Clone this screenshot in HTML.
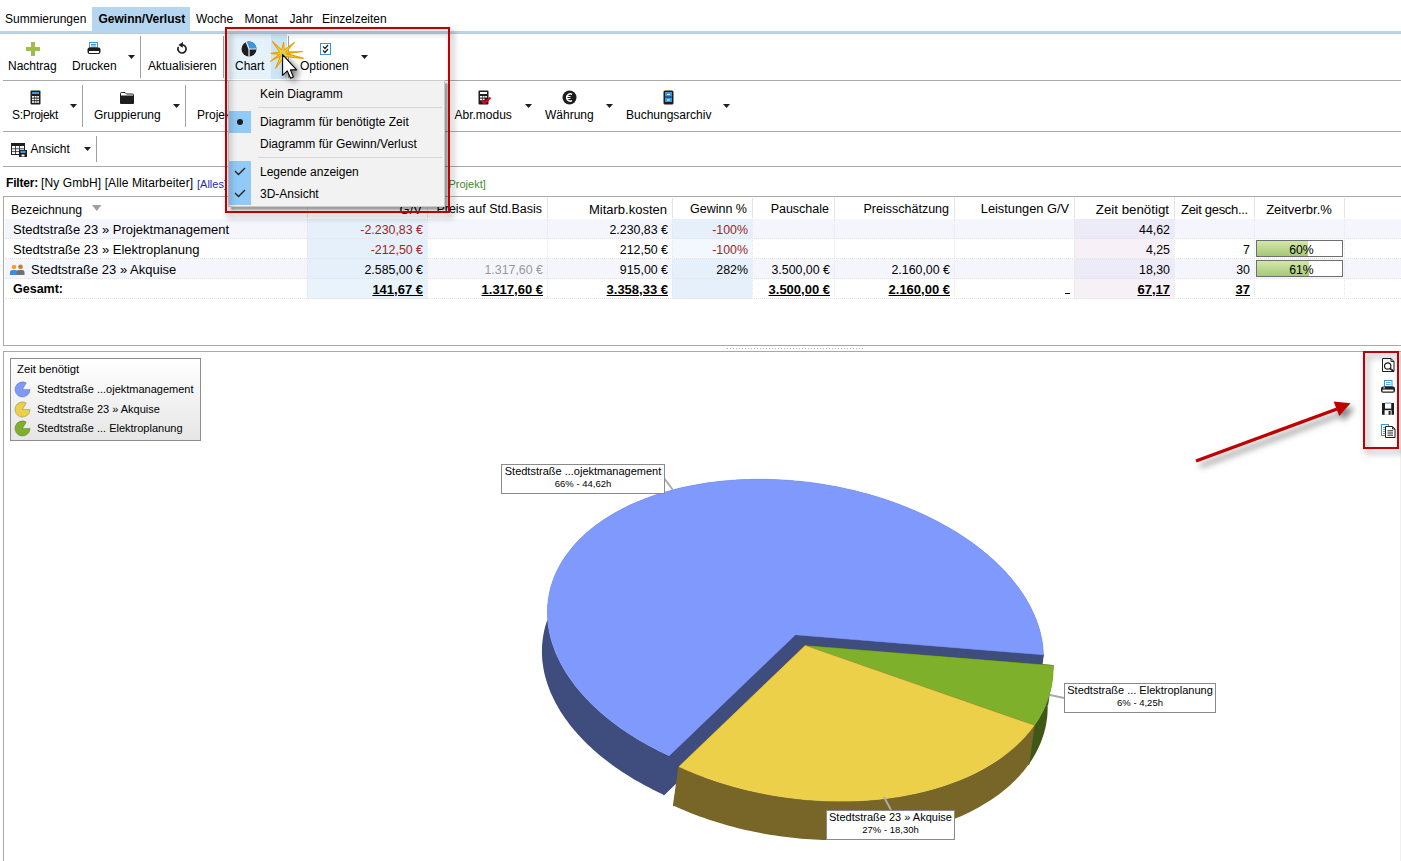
<!DOCTYPE html><html><head><meta charset="utf-8"><style>
html,body{margin:0;padding:0}
body{width:1401px;height:861px;position:relative;overflow:hidden;background:#fff;font-family:'Liberation Sans',sans-serif;}
.t{position:absolute;white-space:nowrap}
.r{position:absolute}
svg.r{overflow:visible}
</style></head><body>
<div class="r" style="left:92px;top:7px;width:98px;height:24px;background:#b5d6f1;"></div>
<div class="r" style="left:0px;top:31px;width:1401px;height:2px;background:#b5d6f1;"></div>
<div class="r" style="left:0px;top:33px;width:1401px;height:1px;background:#c8c8c8;"></div>
<div class="t" style="top:13px;font-size:12px;line-height:12px;color:#000;left:5px;">Summierungen</div>
<div class="t" style="top:13px;font-size:12px;line-height:12px;color:#000;font-weight:bold;left:98.5px;">Gewinn/Verlust</div>
<div class="t" style="top:13px;font-size:12px;line-height:12px;color:#000;left:196px;">Woche</div>
<div class="t" style="top:13px;font-size:12px;line-height:12px;color:#000;left:244.5px;">Monat</div>
<div class="t" style="top:13px;font-size:12px;line-height:12px;color:#000;left:289.5px;">Jahr</div>
<div class="t" style="top:13px;font-size:12px;line-height:12px;color:#000;left:322px;">Einzelzeiten</div>
<div class="r" style="left:3px;top:80px;width:1398px;height:1px;background:#a9a9a9;"></div>
<div class="r" style="left:31px;top:42px;width:4px;height:14px;background:#9fbc4f;"></div>
<div class="r" style="left:26px;top:47px;width:14px;height:4px;background:#9fbc4f;"></div>
<div class="t" style="top:60px;font-size:12px;line-height:12px;color:#000;left:8px;">Nachtrag</div>
<svg class="r" style="left:86px;top:41px" width="16" height="15" viewBox="0 0 16 15">
<rect x="3.5" y="1.5" width="8" height="5" fill="#fff" stroke="#3a96dd" stroke-width="1"/>
<path d="M5 3.5H10M5 5H10" stroke="#3a96dd" stroke-width="1"/>
<rect x="1.5" y="6.5" width="13" height="6.5" rx="2" fill="#1e1e1e"/>
<rect x="3" y="10" width="10" height="2" fill="#fff"/>
</svg>
<div class="t" style="top:60px;font-size:12px;line-height:12px;color:#000;left:72px;">Drucken</div>
<svg class="r" style="left:128px;top:55px" width="8" height="5"><path d="M0 0H7L3.5 4Z" fill="#1e1e1e"/></svg>
<div class="r" style="left:140px;top:36px;width:1px;height:42px;background:#a0a0a0;"></div>
<svg class="r" style="left:176px;top:41px" width="12" height="13" viewBox="0 0 12 13">
<path d="M6 3.8A4.1 4.1 0 1 1 2.45 5.85" fill="none" stroke="#1e1e1e" stroke-width="1.7"/>
<path d="M2.4 3.9L7 1L6.7 6.7Z" fill="#1e1e1e"/>
</svg>
<div class="t" style="top:60px;font-size:12px;line-height:12px;color:#000;left:148px;">Aktualisieren</div>
<div class="r" style="left:223px;top:36px;width:1px;height:42px;background:#a0a0a0;"></div>
<div class="r" style="left:227px;top:34px;width:44px;height:45px;background:#e5f1fb;"></div>
<div class="r" style="left:271px;top:34px;width:16px;height:45px;background:#cce4f7;"></div>
<svg class="r" style="left:241px;top:41px" width="16" height="16" viewBox="0 0 16 16">
<circle cx="8" cy="8" r="7.5" fill="#1e1e1e"/>
<path d="M8 8L5.19 1.05A7.5 7.5 0 0 1 15.5 8Z" fill="#3a96dd"/>
<path d="M8 8L5.19 1.05M8 8H15.6M8 8V15.6" stroke="#e5f1fb" stroke-width="1.2"/>
</svg>
<div class="t" style="top:60px;font-size:12px;line-height:12px;color:#000;left:235px;">Chart</div>
<div class="r" style="left:288px;top:36px;width:1px;height:42px;background:#a0a0a0;"></div>
<svg class="r" style="left:320px;top:43px" width="11" height="12" viewBox="0 0 11 12">
<rect x="0.5" y="0.5" width="10" height="11" fill="#fff" stroke="#3a96dd"/>
<path d="M3 3.5L5 5.5L8 2M3 7.5L5 9.5L8 6" fill="none" stroke="#1e1e1e" stroke-width="1.2"/>
</svg>
<div class="t" style="top:60px;font-size:12px;line-height:12px;color:#000;left:300px;">Optionen</div>
<svg class="r" style="left:361px;top:55px" width="8" height="5"><path d="M0 0H7L3.5 4Z" fill="#1e1e1e"/></svg>
<div class="r" style="left:3px;top:131px;width:1398px;height:1px;background:#a9a9a9;"></div>
<svg class="r" style="left:30px;top:90px" width="11" height="15" viewBox="0 0 11 15">
<rect x="0.5" y="0.5" width="10" height="14" rx="1" fill="#1e1e1e"/>
<rect x="2" y="2" width="7" height="2" fill="#3a96dd"/>
<g fill="#fff"><rect x="2" y="6" width="2" height="1.6"/><rect x="4.6" y="6" width="2" height="1.6"/><rect x="7.2" y="6" width="1.8" height="1.6"/>
<rect x="2" y="8.6" width="2" height="1.6"/><rect x="4.6" y="8.6" width="2" height="1.6"/><rect x="7.2" y="8.6" width="1.8" height="1.6"/>
<rect x="2" y="11.2" width="2" height="1.6"/><rect x="4.6" y="11.2" width="2" height="1.6"/><rect x="7.2" y="11.2" width="1.8" height="1.6"/></g>
</svg>
<div class="t" style="top:109px;font-size:12px;line-height:12px;color:#000;left:12px;letter-spacing:-0.3px;">S:Projekt</div>
<svg class="r" style="left:70px;top:104px" width="8" height="5"><path d="M0 0H7L3.5 4Z" fill="#1e1e1e"/></svg>
<div class="r" style="left:82px;top:85px;width:1px;height:42px;background:#a0a0a0;"></div>
<svg class="r" style="left:120px;top:92px" width="14" height="12" viewBox="0 0 14 12">
<path d="M0.5 1.5Q0.5 0.5 1.5 0.5H5L6.5 2H12.5Q13.5 2 13.5 3V11.5H0.5Z" fill="#fff" stroke="#1e1e1e"/>
<rect x="0.5" y="3.5" width="13" height="8" rx="1" fill="#1e1e1e"/>
</svg>
<div class="t" style="top:109px;font-size:12px;line-height:12px;color:#000;left:94px;">Gruppierung</div>
<svg class="r" style="left:173px;top:104px" width="8" height="5"><path d="M0 0H7L3.5 4Z" fill="#1e1e1e"/></svg>
<div class="r" style="left:185px;top:85px;width:1px;height:42px;background:#a0a0a0;"></div>
<div class="t" style="top:109px;font-size:12px;line-height:12px;color:#000;left:197px;">Projekt</div>
<svg class="r" style="left:478px;top:90px" width="14" height="15" viewBox="0 0 14 15">
<rect x="0.5" y="0.5" width="10" height="14" rx="1" fill="#1e1e1e"/>
<rect x="2" y="2" width="7" height="2" fill="#fff"/>
<g fill="#fff"><rect x="2" y="6" width="2" height="1.6"/><rect x="4.6" y="6" width="2" height="1.6"/><rect x="7.2" y="6" width="1.8" height="1.6"/>
<rect x="2" y="8.6" width="2" height="1.6"/><rect x="4.6" y="8.6" width="2" height="1.6"/></g>
<path d="M3.5 10.5L6.5 13L12.5 7.5" fill="none" stroke="#e8001c" stroke-width="2.2"/>
</svg>
<div class="t" style="top:109px;font-size:12px;line-height:12px;color:#000;left:454.5px;">Abr.modus</div>
<svg class="r" style="left:525px;top:104px" width="8" height="5"><path d="M0 0H7L3.5 4Z" fill="#1e1e1e"/></svg>
<svg class="r" style="left:562px;top:90px" width="15" height="15" viewBox="0 0 15 15">
<circle cx="7.5" cy="7.5" r="7" fill="#1e1e1e"/>
<path d="M10 4.3A3.6 3.6 0 1 0 10 10.7" fill="none" stroke="#fff" stroke-width="1.5"/>
<path d="M4 6.5H8.5M4 8.5H8.5" stroke="#fff" stroke-width="1"/>
</svg>
<div class="t" style="top:109px;font-size:12px;line-height:12px;color:#000;left:545px;">Währung</div>
<svg class="r" style="left:606px;top:104px" width="8" height="5"><path d="M0 0H7L3.5 4Z" fill="#1e1e1e"/></svg>
<svg class="r" style="left:663px;top:90px" width="11" height="15" viewBox="0 0 11 15">
<rect x="0.5" y="0.5" width="10" height="14" rx="1.5" fill="#1e1e1e"/>
<rect x="2" y="2" width="7" height="4.5" fill="#3a96dd"/>
<rect x="2" y="7.5" width="7" height="4.5" fill="#3a96dd"/>
<rect x="4" y="4" width="3" height="1" fill="#fff"/><rect x="4" y="9.5" width="3" height="1" fill="#fff"/>
</svg>
<div class="t" style="top:109px;font-size:12px;line-height:12px;color:#000;left:626px;">Buchungsarchiv</div>
<svg class="r" style="left:723px;top:104px" width="8" height="5"><path d="M0 0H7L3.5 4Z" fill="#1e1e1e"/></svg>
<div class="r" style="left:3px;top:166px;width:1398px;height:1px;background:#a9a9a9;"></div>
<svg class="r" style="left:11px;top:143px" width="16" height="14" viewBox="0 0 16 14">
<rect x="0.5" y="0.5" width="13" height="11" fill="#fff" stroke="#1e1e1e"/>
<rect x="0.5" y="0.5" width="13" height="2.5" fill="#1e1e1e"/>
<path d="M4.5 3V11.5M8.5 3V11.5M0.5 5.8H13.5M0.5 8.6H13.5" stroke="#1e1e1e" stroke-width="0.8"/>
<rect x="8" y="7" width="8" height="7" fill="#1e1e1e"/>
<rect x="9.5" y="7.8" width="5" height="2.2" fill="#3a96dd"/>
<rect x="10.5" y="11.5" width="3" height="2" fill="#fff"/>
</svg>
<div class="t" style="top:143px;font-size:12px;line-height:12px;color:#000;left:30.5px;">Ansicht</div>
<svg class="r" style="left:84px;top:147px" width="8" height="5"><path d="M0 0H7L3.5 4Z" fill="#1e1e1e"/></svg>
<div class="r" style="left:96px;top:136px;width:1px;height:26px;background:#a0a0a0;"></div>
<div class="t" style="top:177px;font-size:12px;line-height:12px;color:#000;font-weight:bold;left:6px;letter-spacing:-0.2px;">Filter:</div>
<div class="t" style="top:177px;font-size:12px;line-height:12px;color:#000;left:41px;letter-spacing:0.1px;">[Ny GmbH] [Alle Mitarbeiter]</div>
<div class="t" style="top:179px;font-size:11px;line-height:11px;color:#2828b4;left:197px;">[Alles]</div>
<div class="t" style="top:179px;font-size:11px;line-height:11px;color:#3c8a1e;left:448.5px;">Projekt]</div>
<div class="r" style="left:3px;top:196px;width:1398px;height:1px;background:#a9a9a9;"></div>
<div class="r" style="left:3px;top:196px;width:1px;height:150px;background:#a9a9a9;"></div>
<div class="r" style="left:3px;top:345px;width:1398px;height:1px;background:#a9a9a9;"></div>
<div class="r" style="left:307px;top:198px;width:1px;height:20px;background:#e4e4e4;"></div>
<div class="r" style="left:427px;top:198px;width:1px;height:20px;background:#e4e4e4;"></div>
<div class="r" style="left:547px;top:198px;width:1px;height:20px;background:#e4e4e4;"></div>
<div class="r" style="left:672px;top:198px;width:1px;height:20px;background:#e4e4e4;"></div>
<div class="r" style="left:752px;top:198px;width:1px;height:20px;background:#e4e4e4;"></div>
<div class="r" style="left:834px;top:198px;width:1px;height:20px;background:#e4e4e4;"></div>
<div class="r" style="left:954px;top:198px;width:1px;height:20px;background:#e4e4e4;"></div>
<div class="r" style="left:1074px;top:198px;width:1px;height:20px;background:#e4e4e4;"></div>
<div class="r" style="left:1174px;top:198px;width:1px;height:20px;background:#e4e4e4;"></div>
<div class="r" style="left:1254px;top:198px;width:1px;height:20px;background:#e4e4e4;"></div>
<div class="r" style="left:1344px;top:198px;width:1px;height:20px;background:#e4e4e4;"></div>
<div class="t" style="top:204px;font-size:12.3px;line-height:12.3px;color:#000;left:11px;">Bezeichnung</div>
<svg class="r" style="left:92px;top:205px" width="10" height="7"><path d="M0 0H9.5L4.75 6Z" fill="#a0a0a0"/></svg>
<div class="t" style="top:203px;font-size:13px;line-height:13px;color:#000;right:979px;text-align:right;">G/V</div>
<div class="t" style="top:203px;font-size:12.5px;line-height:12.5px;color:#000;right:859px;text-align:right;">Preis auf Std.Basis</div>
<div class="t" style="top:203px;font-size:13px;line-height:13px;color:#000;right:734px;text-align:right;">Mitarb.kosten</div>
<div class="t" style="top:203px;font-size:12.5px;line-height:12.5px;color:#000;right:654px;text-align:right;">Gewinn %</div>
<div class="t" style="top:203px;font-size:12.5px;line-height:12.5px;color:#000;right:572px;text-align:right;">Pauschale</div>
<div class="t" style="top:203px;font-size:12.5px;line-height:12.5px;color:#000;right:452px;text-align:right;">Preisschätzung</div>
<div class="t" style="top:203px;font-size:12.8px;line-height:12.8px;color:#000;right:332px;text-align:right;">Leistungen G/V</div>
<div class="t" style="top:203px;font-size:13.3px;line-height:13.3px;color:#000;right:232px;text-align:right;">Zeit benötigt</div>
<div class="t" style="top:203px;font-size:13px;line-height:13px;color:#000;left:1181px;letter-spacing:-0.3px;">Zeit gesch...</div>
<div class="t" style="top:203px;font-size:13px;line-height:13px;color:#000;left:1249.0px;width:100px;text-align:center;">Zeitverbr.%</div>
<div class="r" style="left:5px;top:219px;width:1396px;height:20px;background:#f5f6fd;"></div>
<div class="r" style="left:307px;top:219px;width:120px;height:20px;background:#e6f0fa;"></div>
<div class="r" style="left:672px;top:219px;width:80px;height:20px;background:#e6f0fa;"></div>
<div class="r" style="left:1074px;top:219px;width:100px;height:20px;background:#eeebf8;"></div>
<div class="r" style="left:5px;top:238px;width:1396px;height:0;border-top:1px dotted #e2e2e2"></div>
<div class="r" style="left:5px;top:239px;width:1396px;height:20px;background:#ffffff;"></div>
<div class="r" style="left:307px;top:239px;width:120px;height:20px;background:#e6f0fa;"></div>
<div class="r" style="left:672px;top:239px;width:80px;height:20px;background:#f2f8fd;"></div>
<div class="r" style="left:1074px;top:239px;width:100px;height:20px;background:#f7f1f7;"></div>
<div class="r" style="left:5px;top:258px;width:1396px;height:0;border-top:1px dotted #e2e2e2"></div>
<div class="r" style="left:5px;top:259px;width:1396px;height:20px;background:#f5f6fd;"></div>
<div class="r" style="left:307px;top:259px;width:120px;height:20px;background:#e6f0fa;"></div>
<div class="r" style="left:672px;top:259px;width:80px;height:20px;background:#e6f0fa;"></div>
<div class="r" style="left:1074px;top:259px;width:100px;height:20px;background:#eeebf8;"></div>
<div class="r" style="left:5px;top:278px;width:1396px;height:0;border-top:1px dotted #e2e2e2"></div>
<div class="r" style="left:5px;top:279px;width:1396px;height:20px;background:#ffffff;"></div>
<div class="r" style="left:307px;top:279px;width:120px;height:20px;background:#e9f3fb;"></div>
<div class="r" style="left:672px;top:279px;width:80px;height:20px;background:#e6f0fa;"></div>
<div class="r" style="left:1074px;top:279px;width:100px;height:20px;background:#f7f1f7;"></div>
<div class="r" style="left:5px;top:298px;width:1396px;height:0;border-top:1px dotted #e2e2e2"></div>
<div class="r" style="left:307px;top:219px;width:0;height:80px;border-left:1px dotted #e6e6e6"></div>
<div class="r" style="left:427px;top:219px;width:0;height:80px;border-left:1px dotted #e6e6e6"></div>
<div class="r" style="left:547px;top:219px;width:0;height:80px;border-left:1px dotted #e6e6e6"></div>
<div class="r" style="left:672px;top:219px;width:0;height:80px;border-left:1px dotted #e6e6e6"></div>
<div class="r" style="left:752px;top:219px;width:0;height:80px;border-left:1px dotted #e6e6e6"></div>
<div class="r" style="left:834px;top:219px;width:0;height:80px;border-left:1px dotted #e6e6e6"></div>
<div class="r" style="left:954px;top:219px;width:0;height:80px;border-left:1px dotted #e6e6e6"></div>
<div class="r" style="left:1074px;top:219px;width:0;height:80px;border-left:1px dotted #e6e6e6"></div>
<div class="r" style="left:1174px;top:219px;width:0;height:80px;border-left:1px dotted #e6e6e6"></div>
<div class="r" style="left:1254px;top:219px;width:0;height:80px;border-left:1px dotted #e6e6e6"></div>
<div class="r" style="left:1344px;top:219px;width:0;height:80px;border-left:1px dotted #e6e6e6"></div>
<div class="t" style="top:223px;font-size:13px;line-height:13px;color:#000;left:13px;">Stedtstraße 23 » Projektmanagement</div>
<div class="t" style="top:243px;font-size:13px;line-height:13px;color:#000;left:13px;">Stedtstraße 23 » Elektroplanung</div>
<div class="t" style="top:263px;font-size:13px;line-height:13px;color:#000;left:31px;">Stedtstraße 23 » Akquise</div>
<div class="t" style="top:283px;font-size:12.5px;line-height:12.5px;color:#000;font-weight:bold;left:13px;">Gesamt:</div>
<svg class="r" style="left:10px;top:264px" width="15" height="11" viewBox="0 0 15 11">
<circle cx="4" cy="3" r="2.3" fill="#f0a030"/><path d="M0 11V8Q0 6 2.5 6H5.5Q8 6 8 8V11Z" fill="#3a8ee0"/>
<circle cx="10.5" cy="3" r="2.3" fill="#e09a30"/><path d="M6.5 11V8Q6.5 6 9 6H12Q14.5 6 14.5 8V11Z" fill="#707070"/>
<circle cx="10.5" cy="2.5" r="2.3" fill="#5a4030" opacity="0.25"/>
</svg>
<div class="t" style="top:224px;font-size:12.4px;line-height:12.4px;color:#9c2626;right:978px;text-align:right;">-2.230,83 €</div>
<div class="t" style="top:244px;font-size:12.4px;line-height:12.4px;color:#9c2626;right:978px;text-align:right;">-212,50 €</div>
<div class="t" style="top:264px;font-size:12.4px;line-height:12.4px;color:#000;right:978px;text-align:right;">2.585,00 €</div>
<div class="t" style="top:283px;font-size:13px;line-height:13px;color:#000;font-weight:bold;right:978px;text-align:right;text-decoration:underline;">141,67 €</div>
<div class="t" style="top:264px;font-size:12.4px;line-height:12.4px;color:#999999;right:858px;text-align:right;">1.317,60 €</div>
<div class="t" style="top:283px;font-size:13px;line-height:13px;color:#000;font-weight:bold;right:858px;text-align:right;text-decoration:underline;">1.317,60 €</div>
<div class="t" style="top:224px;font-size:12.4px;line-height:12.4px;color:#000;right:733px;text-align:right;">2.230,83 €</div>
<div class="t" style="top:244px;font-size:12.4px;line-height:12.4px;color:#000;right:733px;text-align:right;">212,50 €</div>
<div class="t" style="top:264px;font-size:12.4px;line-height:12.4px;color:#000;right:733px;text-align:right;">915,00 €</div>
<div class="t" style="top:283px;font-size:13px;line-height:13px;color:#000;font-weight:bold;right:733px;text-align:right;text-decoration:underline;">3.358,33 €</div>
<div class="t" style="top:224px;font-size:12.4px;line-height:12.4px;color:#9c2626;right:653px;text-align:right;">-100%</div>
<div class="t" style="top:244px;font-size:12.4px;line-height:12.4px;color:#9c2626;right:653px;text-align:right;">-100%</div>
<div class="t" style="top:264px;font-size:12.4px;line-height:12.4px;color:#000;right:653px;text-align:right;">282%</div>
<div class="t" style="top:264px;font-size:12.4px;line-height:12.4px;color:#000;right:571px;text-align:right;">3.500,00 €</div>
<div class="t" style="top:283px;font-size:13px;line-height:13px;color:#000;font-weight:bold;right:571px;text-align:right;text-decoration:underline;">3.500,00 €</div>
<div class="t" style="top:264px;font-size:12.4px;line-height:12.4px;color:#000;right:451px;text-align:right;">2.160,00 €</div>
<div class="t" style="top:283px;font-size:13px;line-height:13px;color:#000;font-weight:bold;right:451px;text-align:right;text-decoration:underline;">2.160,00 €</div>
<div class="r" style="left:1065px;top:293px;width:5px;height:1px;background:#000;"></div>
<div class="t" style="top:224px;font-size:12.4px;line-height:12.4px;color:#000;right:231px;text-align:right;">44,62</div>
<div class="t" style="top:244px;font-size:12.4px;line-height:12.4px;color:#000;right:231px;text-align:right;">4,25</div>
<div class="t" style="top:264px;font-size:12.4px;line-height:12.4px;color:#000;right:231px;text-align:right;">18,30</div>
<div class="t" style="top:283px;font-size:13px;line-height:13px;color:#000;font-weight:bold;right:231px;text-align:right;text-decoration:underline;">67,17</div>
<div class="t" style="top:244px;font-size:12.4px;line-height:12.4px;color:#000;right:151px;text-align:right;">7</div>
<div class="t" style="top:264px;font-size:12.4px;line-height:12.4px;color:#000;right:151px;text-align:right;">30</div>
<div class="t" style="top:283px;font-size:13px;line-height:13px;color:#000;font-weight:bold;right:151px;text-align:right;text-decoration:underline;">37</div>
<div class="r" style="left:1256px;top:240px;width:85px;height:15px;border:1px solid #6e6e6e;background:#fff"></div>
<div class="r" style="left:1257px;top:241px;width:51px;height:15px;background:linear-gradient(#d2e7aa,#a6c976)"></div>
<div class="t" style="top:244px;font-size:12.2px;line-height:12.2px;color:#000;left:1261.5px;width:80px;text-align:center;">60%</div>
<div class="r" style="left:1256px;top:260px;width:85px;height:15px;border:1px solid #6e6e6e;background:#fff"></div>
<div class="r" style="left:1257px;top:261px;width:52px;height:15px;background:linear-gradient(#d2e7aa,#a6c976)"></div>
<div class="t" style="top:264px;font-size:12.2px;line-height:12.2px;color:#000;left:1261.5px;width:80px;text-align:center;">61%</div>
<div class="r" style="left:3px;top:351px;width:1398px;height:1px;background:#a9a9a9;"></div>
<div class="r" style="left:3px;top:351px;width:1px;height:510px;background:#a9a9a9;"></div>
<div class="r" style="left:727px;top:348px;width:137px;height:1px;background:repeating-linear-gradient(90deg,#b0b0b0 0 1px,transparent 1px 3px)"></div>
<div class="r" style="left:1400px;top:352px;width:1px;height:509px;background:#f0f0f0;"></div>
<div class="r" style="left:10px;top:358px;width:189px;height:81px;border:1px solid #8c8c8c;background:linear-gradient(#ffffff,#e6e6e6)"></div>
<div class="t" style="top:364px;font-size:11.3px;line-height:11.3px;color:#000;left:17px;">Zeit benötigt</div>
<svg class="r" style="left:14.4px;top:381.3px" width="17" height="17" viewBox="0 0 17 17"><path d="M8.5 8.5H16.1A7.6 7.6 0 1 1 12.3 1.92Z" fill="#7f99fd" stroke="rgba(0,0,0,0.25)" stroke-width="0.8"/></svg>
<div class="t" style="top:384px;font-size:11px;line-height:11px;color:#000;left:37px;">Stedtstraße ...ojektmanagement</div>
<svg class="r" style="left:14.4px;top:400.5px" width="17" height="17" viewBox="0 0 17 17"><path d="M8.5 8.5H16.1A7.6 7.6 0 1 1 12.3 1.92Z" fill="#edd04a" stroke="rgba(0,0,0,0.25)" stroke-width="0.8"/></svg>
<div class="t" style="top:404px;font-size:11px;line-height:11px;color:#000;left:37px;">Stedtstraße 23 » Akquise</div>
<svg class="r" style="left:14.4px;top:420px" width="17" height="17" viewBox="0 0 17 17"><path d="M8.5 8.5H16.1A7.6 7.6 0 1 1 12.3 1.92Z" fill="#7fb02c" stroke="rgba(0,0,0,0.25)" stroke-width="0.8"/></svg>
<div class="t" style="top:423px;font-size:11px;line-height:11px;color:#000;left:37px;">Stedtstraße ... Elektroplanung</div>
<svg class="r" style="left:0;top:0" width="1401" height="861"><polygon points="669.2,755.7 665.4,753.9 661.8,752.2 658.1,750.4 654.6,748.5 651.0,746.7 647.5,744.8 644.0,742.8 640.6,740.9 637.3,738.9 633.9,736.8 630.7,734.8 627.5,732.7 624.3,730.5 621.2,728.4 618.1,726.2 615.1,724.0 612.2,721.8 609.3,719.5 606.4,717.2 603.7,714.9 600.9,712.5 598.3,710.2 595.7,707.8 593.1,705.4 590.7,702.9 588.2,700.5 585.9,698.0 583.6,695.5 581.4,693.0 579.2,690.5 577.1,687.9 575.1,685.4 573.2,682.8 571.3,680.2 569.4,677.6 567.7,675.0 566.0,672.4 564.4,669.7 562.9,667.1 561.4,664.4 560.0,661.7 558.7,659.0 557.4,656.3 556.2,653.7 555.1,651.0 554.1,648.2 553.1,645.5 552.2,642.8 551.4,640.1 550.7,637.4 550.0,634.7 549.4,632.0 548.9,629.2 548.5,626.5 548.1,623.8 547.8,621.1 547.6,618.4 547.5,615.7 547.4,613.0 547.5,610.3 547.5,607.6 547.7,605.0 548.0,602.3 548.3,599.6 548.7,597.0 549.1,594.4 549.7,591.7 550.3,589.1 551.0,586.5 551.8,584.0 552.6,581.4 553.6,578.9 554.5,576.3 555.6,573.8 556.8,571.3 558.0,568.9 559.3,566.4 560.6,564.0 562.0,561.6 563.5,559.2 565.1,556.8 566.8,554.5 568.5,552.2 570.3,549.9 572.1,547.6 574.0,545.4 576.0,543.1 578.1,541.0 580.2,538.8 582.4,536.7 584.6,534.6 587.0,532.5 589.3,530.5 591.8,528.5 594.3,526.5 596.9,524.6 599.5,522.7 602.2,520.8 604.9,519.0 607.7,517.2 610.6,515.4 613.5,513.7 616.5,512.0 619.5,510.4 622.6,508.8 625.7,507.2 628.9,505.6 632.2,504.1 635.5,502.7 638.8,501.3 642.2,499.9 645.6,498.6 649.1,497.3 652.6,496.0 656.2,494.8 659.8,493.7 663.4,492.5 667.1,491.5 670.9,490.4 674.6,489.4 678.4,488.5 682.3,487.6 686.2,486.7 690.1,485.9 694.0,485.2 698.0,484.4 702.0,483.8 706.0,483.1 710.1,482.6 714.2,482.0 718.3,481.5 722.4,481.1 726.6,480.7 730.7,480.4 734.9,480.1 739.2,479.8 743.4,479.6 747.6,479.5 751.9,479.3 756.2,479.3 760.5,479.3 764.8,479.3 769.1,479.4 773.4,479.5 777.7,479.7 782.0,479.9 786.4,480.2 790.7,480.5 795.0,480.9 799.4,481.3 803.7,481.7 808.0,482.2 812.4,482.8 816.7,483.4 821.0,484.0 825.3,484.7 829.6,485.5 833.9,486.2 838.2,487.1 842.5,487.9 846.7,488.9 850.9,489.8 855.2,490.8 859.4,491.9 863.5,493.0 867.7,494.1 871.8,495.3 876.0,496.5 880.0,497.8 884.1,499.1 888.1,500.4 892.1,501.8 896.1,503.3 900.1,504.7 904.0,506.3 907.9,507.8 911.7,509.4 915.5,511.0 919.3,512.7 923.0,514.4 926.7,516.1 930.4,517.9 934.0,519.7 937.6,521.6 941.1,523.4 944.6,525.4 948.1,527.3 951.4,529.3 954.8,531.3 958.1,533.3 961.3,535.4 964.5,537.5 967.7,539.7 970.8,541.8 973.8,544.0 976.8,546.2 979.7,548.5 982.6,550.8 985.4,553.1 988.2,555.4 990.9,557.8 993.5,560.1 996.1,562.5 998.6,564.9 1001.1,567.4 1003.4,569.8 1005.8,572.3 1008.0,574.8 1010.2,577.3 1012.4,579.9 1014.4,582.4 1016.4,585.0 1018.4,587.6 1020.2,590.2 1022.0,592.8 1023.8,595.4 1025.4,598.0 1027.0,600.7 1028.5,603.3 1030.0,606.0 1031.3,608.7 1032.6,611.4 1033.8,614.1 1035.0,616.8 1036.1,619.5 1037.1,622.2 1038.0,624.9 1038.9,627.6 1039.7,630.3 1040.4,633.0 1041.0,635.8 1041.6,638.5 1042.1,641.2 1042.5,643.9 1042.8,646.6 1043.1,649.3 1043.2,652.0 1043.3,654.7 1037.8,693.7 1037.7,691.0 1037.6,688.3 1037.3,685.6 1037.0,682.9 1036.6,680.2 1036.1,677.5 1035.5,674.8 1034.9,672.0 1034.2,669.3 1033.4,666.6 1032.5,663.9 1031.6,661.2 1030.6,658.5 1029.5,655.8 1028.3,653.1 1027.1,650.4 1025.8,647.7 1024.5,645.0 1023.0,642.3 1021.5,639.7 1019.9,637.0 1018.3,634.4 1016.5,631.8 1014.7,629.2 1012.9,626.6 1010.9,624.0 1008.9,621.4 1006.9,618.9 1004.7,616.3 1002.5,613.8 1000.3,611.3 997.9,608.8 995.6,606.4 993.1,603.9 990.6,601.5 988.0,599.1 985.4,596.8 982.7,594.4 979.9,592.1 977.1,589.8 974.2,587.5 971.3,585.2 968.3,583.0 965.3,580.8 962.2,578.7 959.0,576.5 955.8,574.4 952.6,572.3 949.3,570.3 945.9,568.3 942.6,566.3 939.1,564.4 935.6,562.4 932.1,560.6 928.5,558.7 924.9,556.9 921.2,555.1 917.5,553.4 913.8,551.7 910.0,550.0 906.2,548.4 902.4,546.8 898.5,545.3 894.6,543.7 890.6,542.3 886.6,540.8 882.6,539.4 878.6,538.1 874.5,536.8 870.5,535.5 866.3,534.3 862.2,533.1 858.0,532.0 853.9,530.9 849.7,529.8 845.4,528.8 841.2,527.9 837.0,526.9 832.7,526.1 828.4,525.2 824.1,524.5 819.8,523.7 815.5,523.0 811.2,522.4 806.9,521.8 802.5,521.2 798.2,520.7 793.9,520.3 789.5,519.9 785.2,519.5 780.9,519.2 776.5,518.9 772.2,518.7 767.9,518.5 763.6,518.4 759.3,518.3 755.0,518.3 750.7,518.3 746.4,518.3 742.1,518.5 737.9,518.6 733.7,518.8 729.4,519.1 725.2,519.4 721.1,519.7 716.9,520.1 712.8,520.5 708.7,521.0 704.6,521.6 700.5,522.1 696.5,522.8 692.5,523.4 688.5,524.2 684.6,524.9 680.7,525.7 676.8,526.6 672.9,527.5 669.1,528.4 665.4,529.4 661.6,530.5 657.9,531.5 654.3,532.7 650.7,533.8 647.1,535.0 643.6,536.3 640.1,537.6 636.7,538.9 633.3,540.3 630.0,541.7 626.7,543.1 623.4,544.6 620.2,546.2 617.1,547.8 614.0,549.4 611.0,551.0 608.0,552.7 605.1,554.4 602.2,556.2 599.4,558.0 596.7,559.8 594.0,561.7 591.4,563.6 588.8,565.5 586.3,567.5 583.8,569.5 581.5,571.5 579.1,573.6 576.9,575.7 574.7,577.8 572.6,580.0 570.5,582.1 568.5,584.4 566.6,586.6 564.8,588.9 563.0,591.2 561.3,593.5 559.6,595.8 558.0,598.2 556.5,600.6 555.1,603.0 553.8,605.4 552.5,607.9 551.3,610.3 550.1,612.8 549.0,615.3 548.1,617.9 547.1,620.4 546.3,623.0 545.5,625.5 544.8,628.1 544.2,630.7 543.6,633.4 543.2,636.0 542.8,638.6 542.5,641.3 542.2,644.0 542.0,646.6 542.0,649.3 541.9,652.0 542.0,654.7 542.1,657.4 542.3,660.1 542.6,662.8 543.0,665.5 543.4,668.2 543.9,671.0 544.5,673.7 545.2,676.4 545.9,679.1 546.7,681.8 547.6,684.5 548.6,687.2 549.6,690.0 550.7,692.7 551.9,695.3 553.2,698.0 554.5,700.7 555.9,703.4 557.4,706.1 558.9,708.7 560.5,711.4 562.2,714.0 563.9,716.6 565.8,719.2 567.7,721.8 569.6,724.4 571.6,726.9 573.7,729.5 575.9,732.0 578.1,734.5 580.4,737.0 582.7,739.5 585.2,741.9 587.6,744.4 590.2,746.8 592.8,749.2 595.4,751.5 598.2,753.9 600.9,756.2 603.8,758.5 606.7,760.8 609.6,763.0 612.6,765.2 615.7,767.4 618.8,769.5 622.0,771.7 625.2,773.8 628.4,775.8 631.8,777.9 635.1,779.9 638.5,781.8 642.0,783.8 645.5,785.7 649.1,787.5 652.6,789.4 656.3,791.2 659.9,792.9 663.7,794.7" fill="#3f4c7e" stroke="#3f4c7e" stroke-width="0" stroke-linejoin="round"/><polygon points="795.4,634.7 669.2,755.7 663.7,794.7 789.9,673.7" fill="#3f4c7e" stroke="#3f4c7e" stroke-width="1.2" stroke-linejoin="round"/><polygon points="795.4,634.7 1043.3,654.7 1037.8,693.7 789.9,673.7" fill="#3f4c7e" stroke="#3f4c7e" stroke-width="1.2" stroke-linejoin="round"/><polygon points="795.4,634.7 669.2,755.7 665.4,753.9 661.8,752.2 658.1,750.4 654.6,748.5 651.0,746.7 647.5,744.8 644.0,742.8 640.6,740.9 637.3,738.9 633.9,736.8 630.7,734.8 627.5,732.7 624.3,730.5 621.2,728.4 618.1,726.2 615.1,724.0 612.2,721.8 609.3,719.5 606.4,717.2 603.7,714.9 600.9,712.5 598.3,710.2 595.7,707.8 593.1,705.4 590.7,702.9 588.2,700.5 585.9,698.0 583.6,695.5 581.4,693.0 579.2,690.5 577.1,687.9 575.1,685.4 573.2,682.8 571.3,680.2 569.4,677.6 567.7,675.0 566.0,672.4 564.4,669.7 562.9,667.1 561.4,664.4 560.0,661.7 558.7,659.0 557.4,656.3 556.2,653.7 555.1,651.0 554.1,648.2 553.1,645.5 552.2,642.8 551.4,640.1 550.7,637.4 550.0,634.7 549.4,632.0 548.9,629.2 548.5,626.5 548.1,623.8 547.8,621.1 547.6,618.4 547.5,615.7 547.4,613.0 547.5,610.3 547.5,607.6 547.7,605.0 548.0,602.3 548.3,599.6 548.7,597.0 549.1,594.4 549.7,591.7 550.3,589.1 551.0,586.5 551.8,584.0 552.6,581.4 553.6,578.9 554.5,576.3 555.6,573.8 556.8,571.3 558.0,568.9 559.3,566.4 560.6,564.0 562.0,561.6 563.5,559.2 565.1,556.8 566.8,554.5 568.5,552.2 570.3,549.9 572.1,547.6 574.0,545.4 576.0,543.1 578.1,541.0 580.2,538.8 582.4,536.7 584.6,534.6 587.0,532.5 589.3,530.5 591.8,528.5 594.3,526.5 596.9,524.6 599.5,522.7 602.2,520.8 604.9,519.0 607.7,517.2 610.6,515.4 613.5,513.7 616.5,512.0 619.5,510.4 622.6,508.8 625.7,507.2 628.9,505.6 632.2,504.1 635.5,502.7 638.8,501.3 642.2,499.9 645.6,498.6 649.1,497.3 652.6,496.0 656.2,494.8 659.8,493.7 663.4,492.5 667.1,491.5 670.9,490.4 674.6,489.4 678.4,488.5 682.3,487.6 686.2,486.7 690.1,485.9 694.0,485.2 698.0,484.4 702.0,483.8 706.0,483.1 710.1,482.6 714.2,482.0 718.3,481.5 722.4,481.1 726.6,480.7 730.7,480.4 734.9,480.1 739.2,479.8 743.4,479.6 747.6,479.5 751.9,479.3 756.2,479.3 760.5,479.3 764.8,479.3 769.1,479.4 773.4,479.5 777.7,479.7 782.0,479.9 786.4,480.2 790.7,480.5 795.0,480.9 799.4,481.3 803.7,481.7 808.0,482.2 812.4,482.8 816.7,483.4 821.0,484.0 825.3,484.7 829.6,485.5 833.9,486.2 838.2,487.1 842.5,487.9 846.7,488.9 850.9,489.8 855.2,490.8 859.4,491.9 863.5,493.0 867.7,494.1 871.8,495.3 876.0,496.5 880.0,497.8 884.1,499.1 888.1,500.4 892.1,501.8 896.1,503.3 900.1,504.7 904.0,506.3 907.9,507.8 911.7,509.4 915.5,511.0 919.3,512.7 923.0,514.4 926.7,516.1 930.4,517.9 934.0,519.7 937.6,521.6 941.1,523.4 944.6,525.4 948.1,527.3 951.4,529.3 954.8,531.3 958.1,533.3 961.3,535.4 964.5,537.5 967.7,539.7 970.8,541.8 973.8,544.0 976.8,546.2 979.7,548.5 982.6,550.8 985.4,553.1 988.2,555.4 990.9,557.8 993.5,560.1 996.1,562.5 998.6,564.9 1001.1,567.4 1003.4,569.8 1005.8,572.3 1008.0,574.8 1010.2,577.3 1012.4,579.9 1014.4,582.4 1016.4,585.0 1018.4,587.6 1020.2,590.2 1022.0,592.8 1023.8,595.4 1025.4,598.0 1027.0,600.7 1028.5,603.3 1030.0,606.0 1031.3,608.7 1032.6,611.4 1033.8,614.1 1035.0,616.8 1036.1,619.5 1037.1,622.2 1038.0,624.9 1038.9,627.6 1039.7,630.3 1040.4,633.0 1041.0,635.8 1041.6,638.5 1042.1,641.2 1042.5,643.9 1042.8,646.6 1043.1,649.3 1043.2,652.0 1043.3,654.7" fill="#7f99fd" stroke="#7f99fd" stroke-width="0.6" stroke-linejoin="round"/><polygon points="1053.1,665.7 1053.2,668.5 1053.1,671.2 1053.0,673.9 1052.8,676.7 1052.5,679.4 1052.1,682.1 1051.7,684.8 1051.2,687.4 1050.6,690.1 1049.9,692.8 1049.1,695.4 1048.3,698.0 1047.4,700.6 1046.4,703.2 1045.3,705.8 1044.2,708.3 1043.0,710.8 1041.7,713.3 1040.3,715.8 1038.9,718.3 1037.4,720.7 1035.8,723.1 1034.1,725.5 1028.6,764.5 1030.3,762.1 1031.9,759.7 1033.4,757.3 1034.8,754.8 1036.2,752.3 1037.5,749.8 1038.7,747.3 1039.8,744.8 1040.9,742.2 1041.9,739.6 1042.8,737.0 1043.6,734.4 1044.4,731.8 1045.1,729.1 1045.7,726.4 1046.2,723.8 1046.6,721.1 1047.0,718.4 1047.3,715.7 1047.5,712.9 1047.6,710.2 1047.7,707.5 1047.6,704.7" fill="#3f5816" stroke="#3f5816" stroke-width="0" stroke-linejoin="round"/><polygon points="805.2,645.7 1053.1,665.7 1047.6,704.7 799.7,684.7" fill="#3f5816" stroke="#3f5816" stroke-width="1.2" stroke-linejoin="round"/><polygon points="805.2,645.7 1034.1,725.5 1028.6,764.5 799.7,684.7" fill="#3f5816" stroke="#3f5816" stroke-width="1.2" stroke-linejoin="round"/><polygon points="805.2,645.7 1053.1,665.7 1053.2,668.5 1053.1,671.2 1053.0,673.9 1052.8,676.7 1052.5,679.4 1052.1,682.1 1051.7,684.8 1051.2,687.4 1050.6,690.1 1049.9,692.8 1049.1,695.4 1048.3,698.0 1047.4,700.6 1046.4,703.2 1045.3,705.8 1044.2,708.3 1043.0,710.8 1041.7,713.3 1040.3,715.8 1038.9,718.3 1037.4,720.7 1035.8,723.1 1034.1,725.5" fill="#7fb02c" stroke="#7fb02c" stroke-width="0.6" stroke-linejoin="round"/><polygon points="1034.1,725.5 1032.4,727.8 1030.7,730.1 1028.8,732.4 1026.9,734.6 1024.9,736.9 1022.9,739.0 1020.8,741.2 1018.6,743.3 1016.4,745.4 1014.1,747.5 1011.7,749.5 1009.3,751.5 1006.8,753.5 1004.3,755.4 1001.7,757.3 999.0,759.2 996.3,761.0 993.5,762.8 990.6,764.6 987.7,766.3 984.8,768.0 981.7,769.7 978.7,771.3 975.6,772.9 972.4,774.4 969.2,775.9 965.9,777.4 962.6,778.8 959.2,780.2 955.8,781.5 952.3,782.8 948.8,784.1 945.3,785.3 941.7,786.5 938.1,787.6 934.4,788.7 930.7,789.7 926.9,790.7 923.1,791.7 919.3,792.6 915.4,793.4 911.5,794.3 907.6,795.0 903.7,795.8 899.7,796.5 895.7,797.1 891.6,797.7 887.6,798.2 883.5,798.7 879.3,799.2 875.2,799.6 871.0,799.9 866.9,800.3 862.7,800.5 858.4,800.7 854.2,800.9 849.9,801.0 845.7,801.1 841.4,801.1 837.1,801.1 832.8,801.0 828.5,800.9 824.2,800.8 819.9,800.6 815.6,800.3 811.2,800.0 806.9,799.7 802.6,799.3 798.3,798.8 793.9,798.3 789.6,797.8 785.3,797.2 781.0,796.6 776.7,795.9 772.4,795.2 768.1,794.4 763.8,793.6 759.6,792.8 755.3,791.8 751.1,790.9 746.9,789.9 742.7,788.9 738.5,787.8 734.3,786.7 730.2,785.5 726.1,784.3 722.0,783.1 717.9,781.8 713.9,780.4 709.9,779.1 705.9,777.7 702.0,776.2 698.0,774.7 694.2,773.2 690.3,771.6 686.5,770.0 682.7,768.3 679.0,766.7 673.5,805.7 677.2,807.3 681.0,809.0 684.8,810.6 688.7,812.2 692.5,813.7 696.5,815.2 700.4,816.7 704.4,818.1 708.4,819.4 712.4,820.8 716.5,822.1 720.6,823.3 724.7,824.5 728.8,825.7 733.0,826.8 737.2,827.9 741.4,828.9 745.6,829.9 749.8,830.8 754.1,831.8 758.3,832.6 762.6,833.4 766.9,834.2 771.2,834.9 775.5,835.6 779.8,836.2 784.1,836.8 788.4,837.3 792.8,837.8 797.1,838.3 801.4,838.7 805.7,839.0 810.1,839.3 814.4,839.6 818.7,839.8 823.0,839.9 827.3,840.0 831.6,840.1 835.9,840.1 840.2,840.1 844.4,840.0 848.7,839.9 852.9,839.7 857.2,839.5 861.4,839.3 865.5,838.9 869.7,838.6 873.8,838.2 878.0,837.7 882.1,837.2 886.1,836.7 890.2,836.1 894.2,835.5 898.2,834.8 902.1,834.0 906.0,833.3 909.9,832.4 913.8,831.6 917.6,830.7 921.4,829.7 925.2,828.7 928.9,827.7 932.6,826.6 936.2,825.5 939.8,824.3 943.3,823.1 946.8,821.8 950.3,820.5 953.7,819.2 957.1,817.8 960.4,816.4 963.7,814.9 966.9,813.4 970.1,811.9 973.2,810.3 976.2,808.7 979.3,807.0 982.2,805.3 985.1,803.6 988.0,801.8 990.8,800.0 993.5,798.2 996.2,796.3 998.8,794.4 1001.3,792.5 1003.8,790.5 1006.2,788.5 1008.6,786.5 1010.9,784.4 1013.1,782.3 1015.3,780.2 1017.4,778.0 1019.4,775.9 1021.4,773.6 1023.3,771.4 1025.2,769.1 1026.9,766.8 1028.6,764.5" fill="#786628" stroke="#786628" stroke-width="0" stroke-linejoin="round"/><polygon points="805.2,645.7 1034.1,725.5 1028.6,764.5 799.7,684.7" fill="#786628" stroke="#786628" stroke-width="1.2" stroke-linejoin="round"/><polygon points="805.2,645.7 679.0,766.7 673.5,805.7 799.7,684.7" fill="#786628" stroke="#786628" stroke-width="1.2" stroke-linejoin="round"/><polygon points="805.2,645.7 1034.1,725.5 1032.4,727.8 1030.7,730.1 1028.8,732.4 1026.9,734.6 1024.9,736.9 1022.9,739.0 1020.8,741.2 1018.6,743.3 1016.4,745.4 1014.1,747.5 1011.7,749.5 1009.3,751.5 1006.8,753.5 1004.3,755.4 1001.7,757.3 999.0,759.2 996.3,761.0 993.5,762.8 990.6,764.6 987.7,766.3 984.8,768.0 981.7,769.7 978.7,771.3 975.6,772.9 972.4,774.4 969.2,775.9 965.9,777.4 962.6,778.8 959.2,780.2 955.8,781.5 952.3,782.8 948.8,784.1 945.3,785.3 941.7,786.5 938.1,787.6 934.4,788.7 930.7,789.7 926.9,790.7 923.1,791.7 919.3,792.6 915.4,793.4 911.5,794.3 907.6,795.0 903.7,795.8 899.7,796.5 895.7,797.1 891.6,797.7 887.6,798.2 883.5,798.7 879.3,799.2 875.2,799.6 871.0,799.9 866.9,800.3 862.7,800.5 858.4,800.7 854.2,800.9 849.9,801.0 845.7,801.1 841.4,801.1 837.1,801.1 832.8,801.0 828.5,800.9 824.2,800.8 819.9,800.6 815.6,800.3 811.2,800.0 806.9,799.7 802.6,799.3 798.3,798.8 793.9,798.3 789.6,797.8 785.3,797.2 781.0,796.6 776.7,795.9 772.4,795.2 768.1,794.4 763.8,793.6 759.6,792.8 755.3,791.8 751.1,790.9 746.9,789.9 742.7,788.9 738.5,787.8 734.3,786.7 730.2,785.5 726.1,784.3 722.0,783.1 717.9,781.8 713.9,780.4 709.9,779.1 705.9,777.7 702.0,776.2 698.0,774.7 694.2,773.2 690.3,771.6 686.5,770.0 682.7,768.3 679.0,766.7" fill="#edd04a" stroke="#edd04a" stroke-width="0.6" stroke-linejoin="round"/><path d="M664 478L673 490M1050 695L1064 698M884 797L891 810" stroke="#aaaaaa" stroke-width="2" fill="none"/></svg>
<div class="r" style="left:501px;top:464px;width:162px;height:28px;border:1px solid #8a8a8a;background:#fff"></div>
<div class="t" style="top:466px;font-size:11px;line-height:11px;color:#000;left:492.0px;width:182px;text-align:center;">Stedtstraße ...ojektmanagement</div>
<div class="t" style="top:479px;font-size:9.5px;line-height:9.5px;color:#000;left:502.0px;width:162px;text-align:center;">66% - 44,62h</div>
<div class="r" style="left:1064px;top:683px;width:150px;height:28px;border:1px solid #8a8a8a;background:#fff"></div>
<div class="t" style="top:685px;font-size:11px;line-height:11px;color:#000;left:1055.0px;width:170px;text-align:center;">Stedtstraße ... Elektroplanung</div>
<div class="t" style="top:698px;font-size:9.5px;line-height:9.5px;color:#000;left:1065.0px;width:150px;text-align:center;">6% - 4,25h</div>
<div class="r" style="left:826px;top:810px;width:127px;height:28px;border:1px solid #8a8a8a;background:#fff"></div>
<div class="t" style="top:812px;font-size:11px;line-height:11px;color:#000;left:817.0px;width:147px;text-align:center;">Stedtstraße 23 » Akquise</div>
<div class="t" style="top:825px;font-size:9.5px;line-height:9.5px;color:#000;left:827.0px;width:127px;text-align:center;">27% - 18,30h</div>
<svg class="r" style="left:1380px;top:356px" width="18" height="84" viewBox="0 0 18 84">
<path d="M2.5 2.5H11L14 5.5V15.5H2.5Z" fill="#fff" stroke="#1e1e1e"/>
<path d="M11 2.5V5.5H14" fill="none" stroke="#1e1e1e" stroke-width="0.9"/>
<circle cx="7.7" cy="10" r="3.2" fill="#fff" stroke="#1e1e1e" stroke-width="1.2"/>
<path d="M10 12.4L13.6 15.4" stroke="#1e1e1e" stroke-width="1.7"/>
<rect x="4.5" y="24.5" width="7.5" height="6" fill="#fff" stroke="#3a96dd"/>
<path d="M6 26.6H10.5M6 28.6H10.5" stroke="#3a96dd" stroke-width="0.9"/>
<rect x="1" y="30.4" width="14" height="6.3" rx="2" fill="#1e1e1e"/>
<rect x="2.5" y="33.6" width="11" height="1.9" fill="#fff"/>
<rect x="3.3" y="31.4" width="1.6" height="1" fill="#fff"/>
<path d="M2 47H14V58.8H2Z" fill="#1e1e1e"/>
<rect x="5" y="47" width="6.2" height="5.6" fill="#fff"/>
<rect x="5" y="46.6" width="6.2" height="1" fill="#3a96dd"/>
<rect x="4.6" y="54.2" width="7" height="4.6" fill="#fff"/><rect x="8.6" y="55" width="2" height="3.8" fill="#1e1e1e"/>
<rect x="1.5" y="68.5" width="7" height="11" fill="#fff" stroke="#3a96dd"/>
<path d="M3 71.5H5M3 73.5H5M3 75.5H5M3 77.5H5" stroke="#3a96dd" stroke-width="0.9"/>
<path d="M5.5 70.5H12.5L15 73V81.5H5.5Z" fill="#fff" stroke="#1e1e1e"/>
<path d="M12.5 70.5V73H15" fill="none" stroke="#1e1e1e" stroke-width="0.9"/>
<path d="M7.5 74.8H13M7.5 77H13M7.5 79.2H13" stroke="#1e1e1e" stroke-width="1"/>
</svg>
<div class="r" style="left:228px;top:80px;width:217px;height:127px;background:#f2f2f2;border:1px solid #cccccc;box-sizing:border-box;box-shadow:3px 3px 2px rgba(0,0,0,0.38)"></div>
<div class="r" style="left:258px;top:107px;width:184px;height:1px;background:#d7d7d7;"></div>
<div class="r" style="left:258px;top:157px;width:184px;height:1px;background:#d7d7d7;"></div>
<div class="r" style="left:229px;top:111px;width:22px;height:22px;background:#91c9f7;"></div>
<div class="r" style="left:229px;top:161px;width:22px;height:44px;background:#91c9f7;"></div>
<svg class="r" style="left:236px;top:118px" width="8" height="8"><circle cx="4" cy="4" r="3" fill="#1e1e1e"/></svg>
<svg class="r" style="left:234px;top:166px" width="12" height="36"><path d="M1 5L4.5 8.5L11 2M1 27L4.5 30.5L11 24" fill="none" stroke="#1e1e1e" stroke-width="1.3"/></svg>
<div class="t" style="top:88px;font-size:12px;line-height:12px;color:#000;left:260px;">Kein Diagramm</div>
<div class="t" style="top:116px;font-size:12px;line-height:12px;color:#000;left:260px;">Diagramm für benötigte Zeit</div>
<div class="t" style="top:138px;font-size:12px;line-height:12px;color:#000;left:260px;">Diagramm für Gewinn/Verlust</div>
<div class="t" style="top:166px;font-size:12px;line-height:12px;color:#000;left:260px;">Legende anzeigen</div>
<div class="t" style="top:188px;font-size:12px;line-height:12px;color:#000;left:260px;">3D-Ansicht</div>
<div class="r" style="left:225px;top:27px;width:225px;height:186px;border:2.5px solid #c00000;box-sizing:border-box;filter:drop-shadow(3px 4px 3px rgba(0,0,0,0.45));"></div>
<div class="r" style="left:1363px;top:351px;width:36px;height:98px;border:2.5px solid #c00000;box-sizing:border-box;filter:drop-shadow(3px 4px 3px rgba(0,0,0,0.45));"></div>
<svg class="r" style="left:0;top:0;filter:drop-shadow(4px 5px 3px rgba(0,0,0,0.5))" width="1401" height="861">
<path d="M1196 461L1337 409" stroke="#c00000" stroke-width="3.4"/>
<path d="M1350.5 403.2L1333.6 401.6L1339.3 416Z" fill="#c00000"/>
</svg>
<svg class="r" style="left:0;top:0" width="1401" height="861"><polygon points="272.1,41.1 281.7,50.2 283.6,42.1 284.2,50.3 294.6,42.1 285.9,52.0 302.9,51.5 286.2,53.6 303.7,58.4 284.3,56.5 275.4,68.6 280.5,55.9 270.0,61.6 279.5,54.4 270.8,53.4 279.7,52.0" fill="#f6d84a" stroke="#eca200" stroke-width="1.1" stroke-linejoin="miter"/><circle cx="282.8" cy="53.4" r="2.2" fill="#c8d060"/></svg>
<svg class="r" style="left:0;top:0;filter:drop-shadow(3px 3px 3px rgba(0,0,0,0.55))" width="1401" height="861">
<path d="M282.6 54.6V75.3L287.3 70.9L290.6 78.2L293.4 77L290.4 69.9H296.6Z" fill="#fff" stroke="#000" stroke-width="1.1" stroke-linejoin="round"/>
</svg>
</body></html>
